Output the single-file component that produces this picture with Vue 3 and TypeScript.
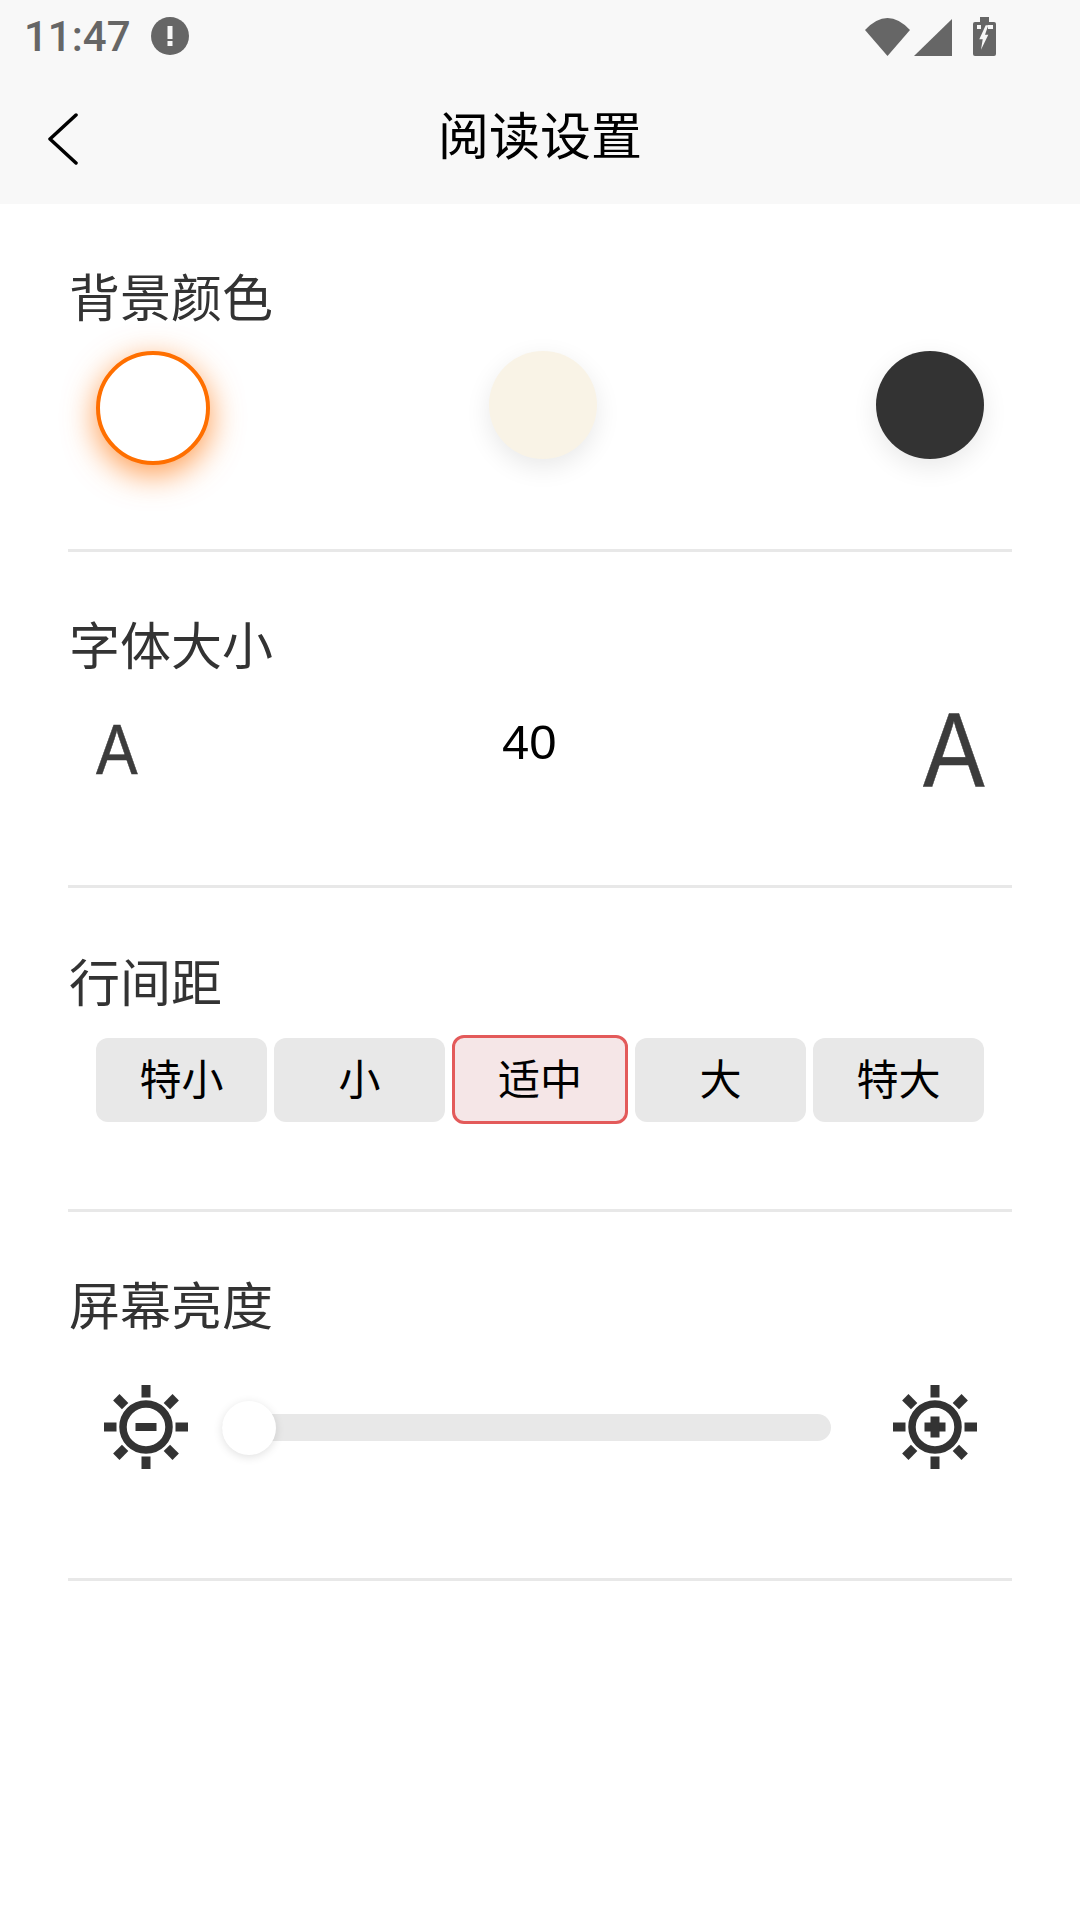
<script setup lang="ts">
import { ref } from "vue";

const colors = [
  { name: "white", value: "#ffffff" },
  { name: "cream", value: "#f9f3e6" },
  { name: "dark", value: "#333333" },
];
const spacings = ["特小", "小", "适中", "大", "特大"];

const activeColor = ref("white");
const activeSpacing = ref("适中");
const fontSize = ref(40);

const rays = [0, 45, 90, 135, 180, 225, 270, 315];
</script>

<template>
  <div class="page">
    <header class="top">
      <div class="status">
        <span class="time">11:47</span>
        <svg class="alert" width="38" height="38" viewBox="0 0 38 38">
          <circle cx="19" cy="19" r="19" fill="#666" />
          <rect x="16.5" y="9" width="5" height="13" fill="#f8f8f8" />
          <rect x="16.5" y="24" width="5" height="5" fill="#f8f8f8" />
        </svg>
        <svg class="status-icons" width="131" height="39" viewBox="865 15 131 39">
          <path d="M865 28Q887.5 4 910 28L887.5 54Z" fill="#666" />
          <path d="M914 54L952 17V54Z" fill="#666" />
          <rect x="980" y="15" width="9" height="6" fill="#666" />
          <rect x="973" y="20" width="23" height="34" rx="2" fill="#666" />
          <rect x="977" y="23" width="4" height="4" fill="#f8f8f8" />
          <rect x="988" y="23" width="5" height="4" fill="#f8f8f8" />
          <path d="M985.7 23.3L979.3 37.3H982.7L981 47.7L988.3 32.7H985L988.3 23.3Z" fill="#f8f8f8" />
        </svg>
      </div>
      <nav class="nav">
        <svg class="back" width="32" height="54" viewBox="0 0 32 54">
          <path d="M29 2L3 26L29 50" fill="none" stroke="#000" stroke-width="3.5" stroke-linecap="round" stroke-linejoin="round" />
        </svg>
        <h1>阅读设置</h1>
      </nav>
    </header>

    <section class="block">
      <h2>背景颜色</h2>
      <div class="colors">
        <button
          v-for="c in colors"
          :key="c.name"
          class="swatch"
          :class="{ active: activeColor === c.name }"
          :style="{ backgroundColor: c.value }"
          @click="activeColor = c.name"
        ></button>
      </div>
    </section>

    <section class="block">
      <h2>字体大小</h2>
      <div class="sizes">
        <span class="letter small">A</span>
        <span class="value">{{ fontSize }}</span>
        <span class="letter large">A</span>
      </div>
    </section>

    <section class="block">
      <h2>行间距</h2>
      <div class="spacings">
        <button
          v-for="s in spacings"
          :key="s"
          class="spacing"
          :class="{ active: activeSpacing === s }"
          @click="activeSpacing = s"
        >
          {{ s }}
        </button>
      </div>
    </section>

    <section class="block">
      <h2>屏幕亮度</h2>
      <div class="brightness">
        <svg width="84" height="84" viewBox="-42 -42 84 84">
          <circle r="23" fill="none" stroke="#333" stroke-width="7.5" />
          <rect v-for="r in rays" :key="r" x="-4.5" y="-42" width="9" height="12.5" fill="#333" :transform="`rotate(${r})`" />
          <rect x="-10.5" y="-4" width="21" height="8" fill="#333" />
        </svg>
        <div class="track">
          <span class="thumb"></span>
        </div>
        <svg width="84" height="84" viewBox="-42 -42 84 84">
          <circle r="23" fill="none" stroke="#333" stroke-width="7.5" />
          <rect v-for="r in rays" :key="r" x="-4.5" y="-42" width="9" height="12.5" fill="#333" :transform="`rotate(${r})`" />
          <rect x="-10.5" y="-4.5" width="21" height="9" fill="#333" />
          <rect x="-4.5" y="-10.5" width="9" height="21" fill="#333" />
        </svg>
      </div>
    </section>
  </div>
</template>

<style>
html,
body {
  margin: 0;
  background: #fff;
}
</style>

<style scoped>
.page {
  min-height: 1920px;
  background: #fff;
  font-family: "Liberation Sans", "Noto Sans CJK SC", sans-serif;
}

.top {
  background: #f8f8f8;
  height: 204px;
}

.status {
  height: 72px;
  display: flex;
  align-items: center;
  padding-left: 24px;
  padding-right: 84px;
}

.time {
  font-family: Roboto, sans-serif;
  font-weight: 500;
  font-size: 42px;
  color: #666;
}

.alert {
  margin-left: 20px;
}

.status-icons {
  margin-left: auto;
}

.nav {
  height: 132px;
  position: relative;
  display: flex;
  align-items: center;
  justify-content: center;
}

.back {
  position: absolute;
  left: 47px;
  top: 41px;
}

h1 {
  margin: 0 0 10px;
  font-size: 51px;
  font-weight: 400;
  color: #000;
}

.block {
  margin: 0 68px;
  border-bottom: 3px solid #e8e8e8;
}

h2 {
  margin: 0 0 0 1px;
  font-size: 51px;
  line-height: 65px;
  font-weight: 400;
  color: #333;
}

.block:nth-of-type(1) {
  padding: 63px 0 84px;
}

.block:nth-of-type(2) {
  padding: 63px 0 0;
}

.block:nth-of-type(3) {
  padding: 64px 0 0;
}

.block:nth-of-type(4) {
  padding: 63px 0 109px;
}

.colors {
  margin-top: 19px;
  padding: 0 28px;
  display: flex;
  justify-content: space-between;
  align-items: flex-start;
}

.swatch {
  width: 108px;
  height: 108px;
  padding: 0;
  border: none;
  border-radius: 50%;
  box-shadow: 0 8px 26px rgba(0, 0, 0, 0.09);
}

.swatch.active {
  width: 114px;
  height: 114px;
  border: 4px solid #ff6f00;
  box-shadow: 0 9px 32px rgba(255, 111, 0, 0.7);
}

.sizes {
  height: 205px;
  padding: 0 28px;
  display: flex;
  justify-content: space-between;
  align-items: flex-start;
}

.letter {
  font-family: "Liberation Sans", sans-serif;
  color: #3c3c3c;
  display: block;
  transform-origin: left center;
}

.letter.small {
  font-size: 71px;
  line-height: 71px;
  margin-top: 34px;
  transform: scaleX(0.88);
  -webkit-text-stroke: 0.5px #3c3c3c;
}

.letter.large {
  font-size: 105px;
  line-height: 105px;
  margin-top: 17px;
  transform: scaleX(0.88);
  margin-right: -9px;
  -webkit-text-stroke: 0.5px #3c3c3c;
}

.value {
  font-size: 49px;
  line-height: 56px;
  margin-top: 34px;
  margin-right: 8px;
  color: #000;
}

.spacings {
  margin-top: 18px;
  padding: 0 28px 85px;
  display: flex;
  align-items: center;
  gap: 7px;
}

.spacing {
  width: 171px;
  height: 84px;
  padding: 0 0 6px;
  border: none;
  border-radius: 12px;
  background: #e8e8e8;
  font-family: inherit;
  font-size: 42px;
  color: #000;
}

.spacing.active {
  width: 176px;
  height: 89px;
  border: 3px solid #e35a5a;
  background: #f5e6e7;
}

.brightness {
  margin-top: 45px;
  padding: 0 35px 0 36px;
  display: flex;
  align-items: center;
}

.track {
  flex: 1;
  height: 27px;
  margin: 0 62px 0 34px;
  border-radius: 14px;
  background: #e8e8e8;
  position: relative;
}

.thumb {
  position: absolute;
  left: 0;
  top: -13px;
  width: 54px;
  height: 54px;
  border-radius: 50%;
  background: #fff;
  box-shadow: 0 2px 10px rgba(0, 0, 0, 0.12);
}
</style>
